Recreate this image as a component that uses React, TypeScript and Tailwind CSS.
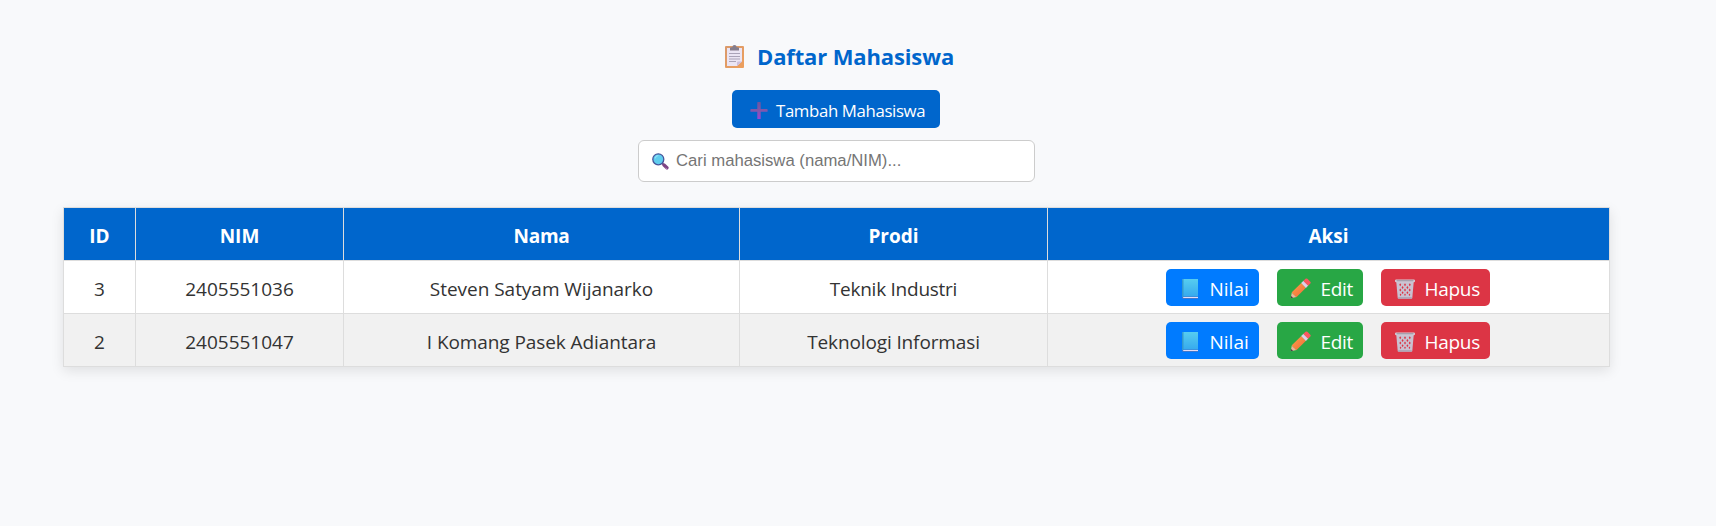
import React from "react";

type Student = { id: number; nim: string; nama: string; prodi: string; namaClass: string; prodiClass: string };

const students: Student[] = [
  { id: 3, nim: "2405551036", nama: "Steven Satyam Wijanarko", prodi: "Teknik Industri", namaClass: "tracking-[-0.03px]", prodiClass: "tracking-[-0.25px]" },
  { id: 2, nim: "2405551047", nama: "I Komang Pasek Adiantara", prodi: "Teknologi Informasi", namaClass: "tracking-[-0.08px]", prodiClass: "tracking-[-0.12px]" },
];

function ClipboardIcon() {
  return (
    <svg width="19" height="23" viewBox="0 0 19 23" className="shrink-0">
      <defs>
        <linearGradient id="board" x1="0" y1="0" x2="1" y2="1">
          <stop offset="0" stopColor="#d99a6c" />
          <stop offset="1" stopColor="#ee9f5c" />
        </linearGradient>
      </defs>
      <rect x="0" y="1" width="19" height="22" rx="1" fill="url(#board)" />
      <path d="M2 3h15v13.5l-5 4.5H2z" fill="#ebe5f4" />
      <path d="M17 16.5l-5 4.5v-3.5q0-1 1-1z" fill="#cdbfdd" />
      <path d="M5 5.6V3.2q0-.9 1-.9h1.3Q7.500 0 9.500 0t2.200 2.300H13q1 0 1 .9v2.400z" fill="#857d8c" />
      <path d="M4 8.500h11M4 11.500h11M4 14h11M4 16.500h7" stroke="#aaa3b8" strokeWidth="1" />
    </svg>
  );
}

function PlusIcon() {
  return (
    <svg width="18" height="17" viewBox="0 0 18 17" className="mt-[2px] shrink-0">
      <defs>
        <linearGradient id="plus" x1="0" y1="0" x2="0" y2="1">
          <stop offset="0" stopColor="#6c55a0" />
          <stop offset="0.500" stopColor="#8058ac" />
          <stop offset="1" stopColor="#9a45d6" />
        </linearGradient>
      </defs>
      <path d="M7.900 0h2.200q.6 0 .6.600v6.500h6.300q.6 0 .6.600v1.500q0 .6-.6.600h-6.300v6.600q0 .6-.6.600H7.900q-.6 0-.6-.6V9.800H1q-.6 0-.6-.6V7.700q0-.6.600-.6h6.300V.600q0-.6.600-.6z" fill="url(#plus)" />
    </svg>
  );
}

function SearchIcon() {
  return (
    <svg width="17" height="17" viewBox="0 0 17 17" className="shrink-0">
      <path d="M10.300 10.300l2 2" stroke="#5a4a80" strokeWidth="1.800" />
      <path d="M12 12.100l2.900 2.700" stroke="#7e4484" strokeWidth="3.400" strokeLinecap="round" />
      <path d="M13.900 15.200l1 .8" stroke="#b98abf" strokeWidth="1" strokeLinecap="round" />
      <circle cx="6.300" cy="6.300" r="5.500" fill="#5fcdee" stroke="#46549a" strokeWidth="1.300" />
      <path d="M3.200 5q.8-2 2.700-2.300" fill="none" stroke="#8fe2f8" strokeWidth="1.200" strokeLinecap="round" />
    </svg>
  );
}

function BookIcon() {
  return (
    <svg width="16" height="20" viewBox="0 0 16 20" className="mt-[2px] shrink-0">
      <defs>
        <linearGradient id="cover" x1="0" y1="0" x2="0" y2="1">
          <stop offset="0" stopColor="#56cdf0" />
          <stop offset="1" stopColor="#36aaee" />
        </linearGradient>
      </defs>
      <path d="M1.500 0H16v20H1.500Q0 20 0 18.500v-17Q0 0 1.500 0z" fill="#3f78cc" />
      <path d="M1.500 0H16v17.500H0V1.500Q0 0 1.500 0z" fill="url(#cover)" />
      <path d="M0 1.500Q0 .200 1.500 0v17.500H0z" fill="#3398cc" />
      <path d="M1.200 18H16v1H1.200z" fill="#e4dcf4" />
    </svg>
  );
}

function PencilIcon() {
  return (
    <svg width="21" height="21" viewBox="0 0 21 21" className="mt-px shrink-0">
      <defs>
        <linearGradient id="wood" x1="0" y1="0" x2="1" y2="1">
          <stop offset="0" stopColor="#ffa047" />
          <stop offset="1" stopColor="#ee6a3c" />
        </linearGradient>
      </defs>
      <path d="M0.700 20.300L1.800 14.600L6.600 19z" fill="#e8b79c" />
      <path d="M0.700 20.300l.4-2.300 2 1.700z" fill="#4b3b48" />
      <path d="M1.800 14.300L11.300 4.900L16 9.700L6.600 19.100Q5.600 19 5 17.500Q3.600 17.300 3.300 15.900Q2 15.500 1.800 14.300z" fill="url(#wood)" />
      <path d="M11.100 5.100l2.400-2.400 4.800 4.800-2.400 2.400z" fill="#ddd0e8" />
      <path d="M13.300 2.900L15.500.800q.9-.8 1.900 0l2.900 2.900q.8.900 0 1.900L18.100 7.700z" fill="#fa5960" />
    </svg>
  );
}

function TrashIcon() {
  return (
    <svg width="20" height="20" viewBox="0 0 20 20" className="mt-[2px] shrink-0">
      <path d="M1.200 2h17.600l-1.500 17q-.1.700-.9.700H3.600q-.8 0-.9-.7z" fill="#c9c1d0" />
      <g fill="#dc3545">
        <path d="M5.200 4.200l1 1.500-1 1.500-1-1.500zM10 4.200l1 1.500-1 1.500-1-1.500zM14.800 4.200l1 1.500-1 1.500-1-1.500z" />
        <path d="M7.600 6.900l1 1.500-1 1.500-1-1.500zM12.400 6.900l1 1.500-1 1.500-1-1.500z" />
        <path d="M5.300 9.600l1 1.500-1 1.500-1-1.500zM10 9.600l1 1.500-1 1.500-1-1.500zM14.700 9.600l1 1.500-1 1.500-1-1.500z" />
        <path d="M7.600 12.300l1 1.400-1 1.400-1-1.400zM12.400 12.300l1 1.400-1 1.400-1-1.400z" />
        <path d="M5.500 14.500l.9 1.200-.9 1.200-.8-1.200zM10 14.500l.9 1.200-.9 1.200-.9-1.200zM14.500 14.500l.8 1.200-.8 1.200-.9-1.200z" />
      </g>
      <rect x="0" y="0.500" width="20" height="2.800" rx="1.200" fill="#d6d0da" />
      <path d="M1.500 1.800h17" stroke="#8c8494" strokeWidth="0.900" />
      <path d="M3.200 18.900h13.600" stroke="#a69cae" strokeWidth="1.200" />
    </svg>
  );
}

const th = "border border-[#ddd] p-0 pt-[3px] text-center align-middle font-bold text-white";
const td = "border border-[#ddd] p-0 pt-[3px] text-center align-middle";
const action = "flex h-[37px] items-center rounded-[5px] text-white";

export default function App() {
  return (
    <div className="min-h-screen bg-[#f8f9fb] font-['Open_Sans','Noto_Sans',sans-serif] text-[#333]">
      <main className="ml-[63px] flex w-[1547px] flex-col items-center pt-[39px]">
        <h2 className="flex h-[34px] w-full items-center pl-[662px] text-[22px] leading-[34px] font-bold text-[#0066cc]">
          <ClipboardIcon />
          <span className="ml-[13px] tracking-[-0.13px] whitespace-nowrap">Daftar Mahasiswa</span>
        </h2>

        <button className="mt-[17px] mr-px flex h-[38px] w-[208px] items-center rounded-[5px] bg-[#0066cc] pl-[18px] text-[16.8px] text-white">
          <PlusIcon />
          <span className="ml-[8px] pt-[3px] tracking-[-0.36px] whitespace-nowrap">Tambah Mahasiswa</span>
        </button>

        <div className="mt-[12px] flex h-[42px] w-[397px] items-center rounded-[6px] border border-[#ccc] bg-white pl-[13px]">
          <SearchIcon />
          <span className="ml-[7px] font-['Liberation_Sans',sans-serif] text-[16.7px] leading-[20px] whitespace-nowrap text-[#757575]">
            Cari mahasiswa (nama/NIM)...
          </span>
        </div>

        <table className="mt-[25px] w-[1547px] table-fixed border-collapse bg-white text-[19px] leading-[26px] shadow-[0_4px_12px_rgba(0,0,0,0.1)]">
          <colgroup>
            <col className="w-[72px]" />
            <col className="w-[208px]" />
            <col className="w-[396px]" />
            <col className="w-[308px]" />
            <col className="w-[562px]" />
          </colgroup>
          <thead>
            <tr className="h-[53px] bg-[#0066cc]">
              <th className={th}>ID</th>
              <th className={th}>NIM</th>
              <th className={th}><span className="tracking-[-0.25px]">Nama</span></th>
              <th className={th}>Prodi</th>
              <th className={th}>Aksi</th>
            </tr>
          </thead>
          <tbody>
            {students.map((s) => (
              <tr key={s.id} className="h-[53px] odd:bg-white even:bg-[#f1f1f1]">
                <td className={td}>{s.id}</td>
                <td className={td}>{s.nim}</td>
                <td className={td}><span className={s.namaClass}>{s.nama}</span></td>
                <td className={td}><span className={s.prodiClass}>{s.prodi}</span></td>
                <td className="border border-[#ddd] p-0 pt-px align-middle">
                  <div className="flex items-center justify-center gap-[18px] pr-[2px]">
                    <a className={`${action} w-[93px] bg-[#007bff] pl-[16px]`}>
                      <BookIcon />
                      <span className="ml-[12px] pt-[2px]">Nilai</span>
                    </a>
                    <a className={`${action} w-[86px] bg-[#28a745] pl-[13px]`}>
                      <PencilIcon />
                      <span className="ml-[10px] pt-[2px] tracking-[-0.3px]">Edit</span>
                    </a>
                    <a className={`${action} w-[109px] bg-[#dc3545] pl-[14px]`}>
                      <TrashIcon />
                      <span className="ml-[10px] pt-[2px] tracking-[-0.3px]">Hapus</span>
                    </a>
                  </div>
                </td>
              </tr>
            ))}
          </tbody>
        </table>
      </main>
    </div>
  );
}
